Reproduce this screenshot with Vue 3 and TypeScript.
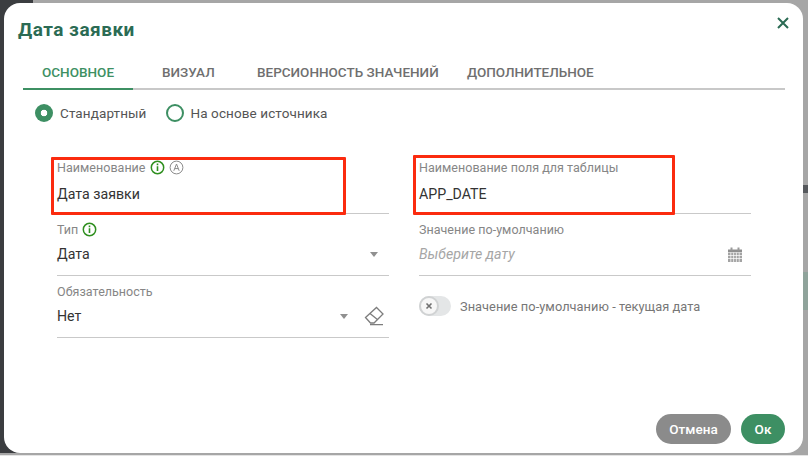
<script setup lang="ts">
const tabs: string[] = ['Основное', 'Визуал', 'Версионность значений', 'Дополнительное']
</script>

<template>
  <div class="page">
    <div class="strip-left"></div>
    <div class="strip-bottom"></div>
    <div class="edge edge-dark"></div>
    <div class="edge edge-green"></div>
    <section class="modal">
      <header class="head">
        <h1>Дата заявки</h1>
        <svg class="close" width="14" height="14" viewBox="0 0 14 14"><path d="M2 2 12 12M12 2 2 12" stroke="#2b6b54" stroke-width="2" fill="none" /></svg>
      </header>
      <nav class="tabs">
        <div v-for="(t, i) in tabs" :key="t" class="tab" :class="{ active: i === 0 }">{{ t }}</div>
      </nav>
      <div class="radios">
        <label class="radio"><span class="dot on"></span>Стандартный</label>
        <label class="radio"><span class="dot"></span>На основе источника</label>
      </div>
      <div class="form">
        <div class="col">
          <div class="field">
            <div class="lab">Наименование
              <svg class="ic" width="15" height="15" viewBox="0 0 15 15"><circle cx="7.5" cy="7.5" r="6.2" fill="none" stroke="#2f8f1f" stroke-width="1.5" /><path d="M7.5 6.3v4.8M7.5 3.6v1.6" stroke="#2f8f1f" stroke-width="1.6" /></svg>
              <svg class="ic" width="15" height="15" viewBox="0 0 15 15"><circle cx="7.5" cy="7.5" r="6.4" fill="none" stroke="#8c8c8c" stroke-width="1" /><path d="M4.8 10.8 7.5 4l2.7 6.8M5.8 8.6h3.4" stroke="#8c8c8c" stroke-width="1" fill="none" /></svg>
            </div>
            <div class="val">Дата заявки</div>
          </div>
          <div class="field">
            <div class="lab">Тип
              <svg class="ic" width="15" height="15" viewBox="0 0 15 15"><circle cx="7.5" cy="7.5" r="6.2" fill="none" stroke="#2f8f1f" stroke-width="1.5" /><path d="M7.5 6.3v4.8M7.5 3.6v1.6" stroke="#2f8f1f" stroke-width="1.6" /></svg>
            </div>
            <div class="val">Дата<span class="spacer"></span><span class="caret cr1"></span></div>
          </div>
          <div class="field">
            <div class="lab">Обязательность</div>
            <div class="val">Нет<span class="spacer"></span><span class="caret cr2"></span>
              <svg class="eraser" width="20" height="20" viewBox="0 0 20 20"><path d="M1.5 11.5 12.5 1.5 19 8 10 17 6.5 17ZM6 7.5 14 14M6 18.7H19" fill="none" stroke="#7d7d7d" stroke-width="1.3" /></svg>
            </div>
          </div>
        </div>
        <div class="col">
          <div class="field">
            <div class="lab">Наименование поля для таблицы</div>
            <div class="val">APP_DATE</div>
          </div>
          <div class="field">
            <div class="lab">Значение по-умолчанию</div>
            <div class="val ph">Выберите дату<span class="spacer"></span>
              <svg class="cal" width="14" height="15" viewBox="0 0 14 15"><path d="M0 2.5h14V5H0Z" fill="#8f8f8f" /><path d="M2.5 .5h2v3h-2ZM9.5 .5h2v3h-2Z" fill="#9a9a9a" /><path d="M0 5.5h14V15H0Z" fill="#a3a3a3" /><path d="M2.8 5.5v9.5M5.6 5.5v9.5M8.4 5.5v9.5M11.2 5.5v9.5M0 8.5h14M0 11.5h14" stroke="#fff" stroke-width=".7" /></svg>
            </div>
          </div>
          <div class="toggle-row">
            <span class="track"><span class="knob"><svg width="8" height="8" viewBox="0 0 8 8"><path d="M1.5 1.5 6.5 6.5M6.5 1.5 1.5 6.5" stroke="#707070" stroke-width="1.6" /></svg></span></span>
            <span class="toggle-text">Значение по-умолчанию - текущая дата</span>
          </div>
        </div>
      </div>
      <footer class="foot">
        <button class="btn grey" type="button">Отмена</button>
        <button class="btn green" type="button">Ок</button>
      </footer>
      <div class="mark m1"></div>
      <div class="mark m2"></div>
    </section>
  </div>
</template>

<style>
html, body { margin: 0; background: #a6a6a6; }
</style>

<style scoped>
.page {
  position: relative;
  width: 808px;
  height: 456px;
  box-sizing: border-box;
  padding: 3px 5px 3px 4px;
  background: #a6a6a6;
  overflow: hidden;
  font-family: Roboto, "Noto Sans", sans-serif;
}
.strip-left { position: absolute; left: 0; top: 0; bottom: 3px; width: 33px; background: #3b3d40; }
.strip-bottom { position: absolute; left: 0; right: 0; bottom: 0; height: 1px; background: #e4e4e4; }
.edge { position: absolute; right: 0; width: 5px; }
.edge-dark { top: 185px; height: 8px; background: #55585c; }
.edge-green { top: 272px; height: 38px; background: #8fa39b; }
.modal {
  position: relative;
  height: 450px;
  box-sizing: border-box;
  padding: 14px 18px 0 14px;
  background: #fff;
  border-radius: 16px;
  display: flex;
  flex-direction: column;
}
.head { display: flex; align-items: flex-start; justify-content: space-between; height: 34px; }
h1 { margin: 0; font-size: 19px; line-height: 26px; font-weight: 700; color: #2b6b54; letter-spacing: .5px; }
.close { margin: 0 -5px 0 0; position: relative; top: -1px; }
.tabs {
  display: flex;
  margin-left: 5px;
  height: 39px;
  box-sizing: border-box;
  border-bottom: 2px solid #c8c8c8;
}
.tab {
  height: 39px;
  box-sizing: border-box;
  line-height: 42px;
  font-size: 13.5px;
  font-weight: 500;
  color: #6f6f6f;
  text-transform: uppercase;
  white-space: nowrap;
}
.tab:nth-child(1) { width: 110px; padding-left: 19px; color: #3d9063; border-bottom: 2px solid #3d9063; }
.tab:nth-child(2) { width: 95px; padding-left: 29px; }
.tab:nth-child(3) { width: 210px; padding-left: 29px; }
.tab:nth-child(4) { padding-left: 29px; }
.radios { display: flex; gap: 19px; padding: 13px 0 0 17px; height: 24px; }
.radio { display: flex; align-items: center; gap: 7px; font-size: 13.5px; letter-spacing: .1px; color: #555; height: 20px; }
.dot {
  width: 18px;
  height: 18px;
  box-sizing: border-box;
  border-radius: 50%;
  border: 2px solid #3d8f63;
  display: inline-block;
}
.dot.on { border: 0; background: radial-gradient(circle, #fff 0 3px, #3d8f63 3.6px); }
.form { display: grid; grid-template-columns: 332px 332px; gap: 30px; padding: 28px 0 0 39px; }
.col { display: flex; flex-direction: column; }
.field { height: 62px; box-sizing: border-box; border-bottom: 1px solid #c9c9c9; padding-top: 5px; }
.field .val { margin-top: 0; }
.field:first-child { height: 59px; padding-top: 2px; }
.field:first-child .val { margin-top: 2px; }
.lab { display: flex; align-items: center; gap: 4px; height: 20px; font-size: 12.5px; letter-spacing: .03px; color: #868686; white-space: nowrap; }
.ic { flex: none; }
.val {
  display: flex;
  align-items: center;
  height: 30px;
  font-size: 14.2px;
  color: #333;
}
.spacer { flex: 1; }
.ph { font-style: italic; color: #a6a6a6; }
.caret { width: 0; height: 0; border-left: 4.5px solid transparent; border-right: 4.5px solid transparent; border-top: 5px solid #909090; }
.cr1 { margin-right: 11px; }
.cr2 { margin-right: 16px; }
.eraser { margin-right: 5px; }
.cal { margin-right: 9px; }
.toggle-row { display: flex; align-items: center; gap: 9px; margin-top: 19px; height: 22px; }
.track { width: 32px; height: 20px; border-radius: 10px; background: #e4e6e7; display: flex; }
.knob {
  width: 20px;
  height: 20px;
  box-sizing: border-box;
  border-radius: 50%;
  border: 2px solid #d0d2d3;
  background: #f7f7f7;
  display: flex;
  align-items: center;
  justify-content: center;
}
.toggle-text { font-size: 12.8px; letter-spacing: .05px; color: #777; white-space: nowrap; }
.foot { position: absolute; right: 18px; top: 411px; display: flex; gap: 10px; }
.btn {
  height: 30px;
  border: 0;
  border-radius: 15px;
  padding: 0;
  font-family: inherit;
  font-size: 13.5px;
  font-weight: 500;
  color: #fff;
}
.grey { width: 75px; background: #8b8b8b; }
.green { width: 44px; background: #3d8f63; }
.mark { position: absolute; box-sizing: border-box; border: 3px solid #fb2b0f; border-radius: 1px; }
.m1 { left: 47px; top: 154px; width: 295px; height: 58px; }
.m2 { left: 409px; top: 152px; width: 262px; height: 60px; }
</style>
